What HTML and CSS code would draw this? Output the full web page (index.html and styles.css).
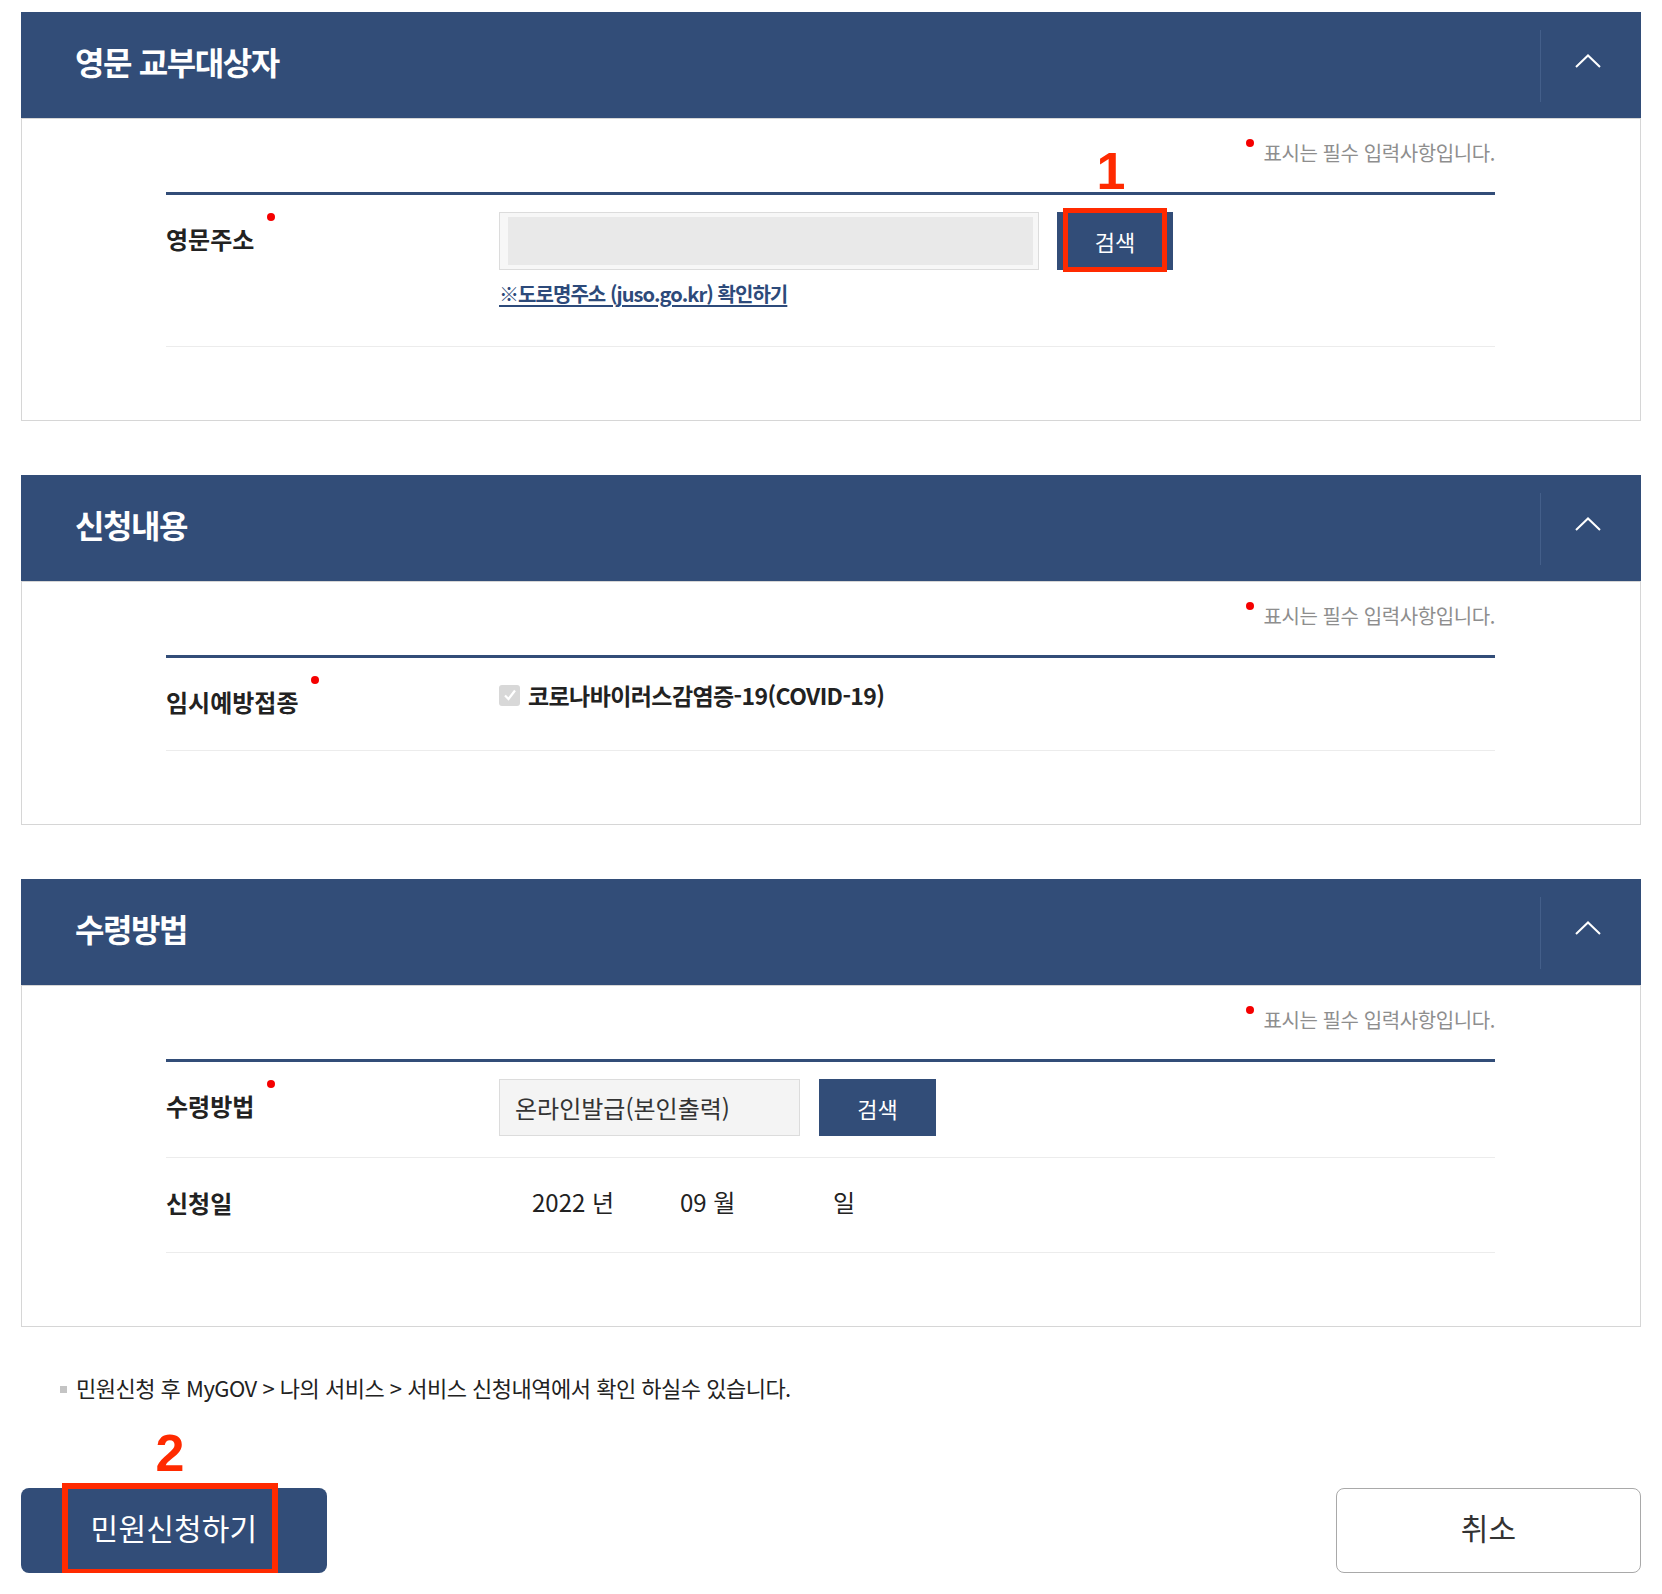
FILE: index.html
```html
<!DOCTYPE html>
<html lang="ko">
<head>
    <meta charset="UTF-8">
    <meta name="viewport" content="width=device-width, initial-scale=1.0">
    <title>민원신청</title>
    <link rel="stylesheet" href="styles.css">
</head>
<body>

<div class="wrap">

    <!-- 영문 교부대상자 -->
    <div class="section">
        <div class="section-head">
            <h2>영문 교부대상자</h2>
            <button class="toggle" type="button">
                <svg width="26" height="14" viewBox="0 0 26 14"><polyline points="1,13 13,1.5 25,13" fill="none" stroke="#fff" stroke-width="2"/></svg>
            </button>
        </div>
        <div class="section-body">
            <p class="req-note"><span class="dot"></span>표시는 필수 입력사항입니다.</p>
            <div class="form-table">
                <div class="form-row">
                    <div class="th">영문주소<span class="dot"></span></div>
                    <div class="td">
                        <div class="field-line">
                            <div class="addr-input"><span></span></div>
                            <div class="mark-wrap">
                                <button class="btn-search btn-addr" type="button">검색</button>
                                <span class="mark-box box-1"></span>
                                <span class="mark-num num-1">1</span>
                            </div>
                        </div>
                        <a class="addr-link" href="#">※도로명주소 (juso.go.kr) 확인하기</a>
                    </div>
                </div>
            </div>
        </div>
    </div>

    <!-- 신청내용 -->
    <div class="section">
        <div class="section-head">
            <h2>신청내용</h2>
            <button class="toggle" type="button">
                <svg width="26" height="14" viewBox="0 0 26 14"><polyline points="1,13 13,1.5 25,13" fill="none" stroke="#fff" stroke-width="2"/></svg>
            </button>
        </div>
        <div class="section-body">
            <p class="req-note"><span class="dot"></span>표시는 필수 입력사항입니다.</p>
            <div class="form-table">
                <div class="form-row">
                    <div class="th">임시예방접종<span class="dot"></span></div>
                    <div class="td">
                        <label class="chk">
                            <span class="chk-box">
                                <svg width="14" height="12" viewBox="0 0 14 12"><polyline points="2,6.5 5.5,10 12,1.5" fill="none" stroke="#fff" stroke-width="2.2"/></svg>
                            </span>
                            코로나바이러스감염증-19(COVID-19)
                        </label>
                    </div>
                </div>
            </div>
        </div>
    </div>

    <!-- 수령방법 -->
    <div class="section">
        <div class="section-head">
            <h2>수령방법</h2>
            <button class="toggle" type="button">
                <svg width="26" height="14" viewBox="0 0 26 14"><polyline points="1,13 13,1.5 25,13" fill="none" stroke="#fff" stroke-width="2"/></svg>
            </button>
        </div>
        <div class="section-body">
            <p class="req-note"><span class="dot"></span>표시는 필수 입력사항입니다.</p>
            <div class="form-table">
                <div class="form-row">
                    <div class="th">수령방법<span class="dot"></span></div>
                    <div class="td">
                        <div class="field-line field-gap">
                            <div class="recv-input">온라인발급(본인출력)</div>
                            <button class="btn-search btn-recv" type="button">검색</button>
                        </div>
                    </div>
                </div>
                <div class="form-row">
                    <div class="th th-tall">신청일</div>
                    <div class="td">
                        <div class="date-line">
                            <span>2022 년</span>
                            <span>09 월</span>
                            <span>일</span>
                        </div>
                    </div>
                </div>
            </div>
        </div>
    </div>

    <p class="notice"><span class="sq"></span>민원신청 후 MyGOV &gt; 나의 서비스 &gt; 서비스 신청내역에서 확인 하실수 있습니다.</p>

    <div class="btn-area">
        <div class="mark-wrap">
            <button class="btn-big btn-apply" type="button">민원신청하기</button>
            <span class="mark-box box-2"></span>
            <span class="mark-num num-2">2</span>
        </div>
        <button class="btn-big btn-cancel" type="button">취소</button>
    </div>

</div>

</body>
</html>
```

FILE: styles.css
```css
body {
    margin: 0;
    font-family: "Noto Sans CJK KR", "Noto Sans", sans-serif;
    color: #222;
    background-color: #fff;
}

.wrap {
    padding: 12px 21px 0;
}

.section {
    margin-bottom: 54px;
}

.section-head {
    height: 106px;
    background-color: #324d78;
    display: flex;
    align-items: center;
    justify-content: space-between;
}

.section-head h2 {
    margin: 0 0 9px 54px;
    font-size: 32px;
    font-weight: 700;
    letter-spacing: -1.4px;
    color: #fff;
    line-height: 40px;
}

.toggle {
    width: 101px;
    height: 72px;
    margin-top: 2px;
    padding: 0 6px 10px 0;
    border: none;
    border-left: 1px solid #445f8a;
    background: none;
    display: flex;
    align-items: center;
    justify-content: center;
    cursor: pointer;
}

.section-body {
    border: 1px solid #d6d6d6;
    padding: 19px 145px 73px 144px;
}

.dot {
    display: inline-block;
    width: 8px;
    height: 8px;
    border-radius: 50%;
    background-color: #f50000;
    vertical-align: top;
}

.req-note {
    margin: 0 0 24px;
    text-align: right;
    font-size: 20px;
    line-height: 30px;
    letter-spacing: -0.4px;
    color: #8e8e8e;
}

.req-note .dot {
    margin: 1px 9px 0 0;
}

.form-table {
    border-top: 3px solid #324d78;
}

.form-row {
    display: grid;
    grid-template-columns: 333px 1fr;
    padding: 17px 0 21px;
    border-bottom: 1px solid #ececec;
}

.th {
    font-size: 24px;
    font-weight: 700;
    line-height: 54px;
    color: #222;
}

.th-tall {
    line-height: 56px;
}

.th .dot {
    margin: 1px 0 0 13px;
}

.field-line {
    display: flex;
    gap: 18px;
}

.field-gap {
    gap: 19px;
}

.addr-input {
    width: 540px;
    height: 58px;
    box-sizing: border-box;
    border: 1px solid #dcdcdc;
    background-color: #f7f7f7;
    padding: 4px 5px 4px 8px;
}

.addr-input span {
    display: block;
    height: 100%;
    background-color: #e9e9e9;
}

.btn-search {
    border: none;
    background-color: #324d78;
    color: #fff;
    font-family: inherit;
    font-size: 22px;
    cursor: pointer;
}

.btn-addr {
    width: 116px;
    height: 58px;
}

.btn-recv {
    width: 117px;
    height: 57px;
}

.addr-link {
    display: inline-block;
    margin: 9px 0 16px;
    font-size: 20px;
    font-weight: 700;
    line-height: 30px;
    letter-spacing: -0.95px;
    color: #2d4a7a;
    text-decoration: underline;
    text-underline-offset: 3px;
}

.chk {
    display: flex;
    align-items: center;
    gap: 8px;
    height: 40px;
    font-size: 23px;
    font-weight: 700;
    letter-spacing: -0.6px;
    color: #222;
}

.chk-box {
    width: 21px;
    height: 21px;
    border-radius: 3px;
    background-color: #d8d8d8;
    display: flex;
    align-items: center;
    justify-content: center;
}

.recv-input {
    width: 301px;
    height: 57px;
    box-sizing: border-box;
    border: 1px solid #dcdcdc;
    background-color: #f4f4f4;
    padding-left: 15px;
    font-size: 24px;
    line-height: 55px;
    color: #333;
}

.date-line {
    display: grid;
    grid-template-columns: 148px 153px auto;
    padding-left: 33px;
    font-size: 24px;
    line-height: 54px;
    color: #222;
}

.notice {
    margin: -8px 0 0;
    padding-left: 39px;
    display: flex;
    align-items: center;
    font-size: 22px;
    line-height: 28px;
    letter-spacing: -0.5px;
    color: #222;
}

.sq {
    width: 7px;
    height: 7px;
    background-color: #c4c4c4;
    margin: 4px 9px 0 0;
}

.btn-area {
    display: flex;
    justify-content: space-between;
    margin-top: 87px;
}

.btn-big {
    height: 85px;
    padding: 0 0 8px;
    border-radius: 8px;
    font-family: inherit;
    font-size: 30px;
    font-weight: 400;
    letter-spacing: 0.2px;
    cursor: pointer;
}

.btn-apply {
    width: 306px;
    border: none;
    background-color: #324d78;
    color: #fff;
}

.btn-cancel {
    width: 305px;
    border: 1px solid #a9a9a9;
    background-color: #fff;
    color: #333;
}

/* 안내용 빨간 표시 */
.mark-wrap {
    position: relative;
    display: flex;
}

.mark-box {
    position: absolute;
    border: 5px solid #ff2a00;
    box-sizing: border-box;
}

.box-1 {
    left: 6px;
    top: -4px;
    width: 104px;
    height: 64px;
}

.box-2 {
    left: 41px;
    top: -5px;
    width: 216px;
    height: 92px;
    border-width: 6px;
}

.mark-num {
    position: absolute;
    width: 50px;
    text-align: center;
    font-family: "Liberation Sans", Arial, sans-serif;
    font-size: 52px;
    font-weight: 700;
    line-height: 52px;
    color: #ff2a00;
}

.num-1 {
    left: 29px;
    top: -67px;
}

.num-2 {
    left: 124px;
    top: -61px;
}
```
